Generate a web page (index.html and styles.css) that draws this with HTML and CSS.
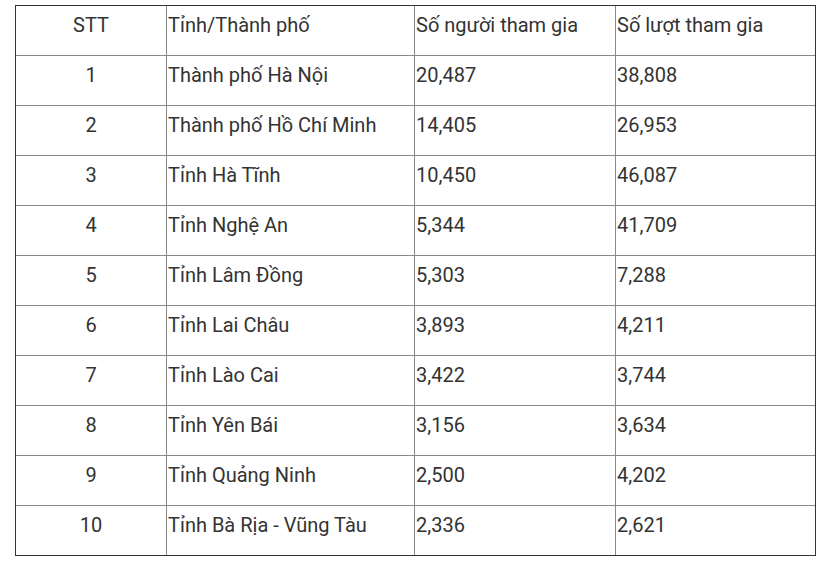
FILE: index.html
```html
<!DOCTYPE html>
<html lang="vi">
<head>
<meta charset="utf-8">
<link rel="stylesheet" href="styles.css">
</head>
<body>
<table class="stats">
  <colgroup>
    <col class="c1"><col class="c2"><col class="c3"><col class="c4">
  </colgroup>
  <tr><td class="num">STT</td><td>Tỉnh/Thành phố</td><td>Số người tham gia</td><td>Số lượt tham gia</td></tr>
  <tr><td class="num">1</td><td>Thành phố Hà Nội</td><td>20,487</td><td>38,808</td></tr>
  <tr><td class="num">2</td><td>Thành phố Hồ Chí Minh</td><td>14,405</td><td>26,953</td></tr>
  <tr><td class="num">3</td><td>Tỉnh Hà Tĩnh</td><td>10,450</td><td>46,087</td></tr>
  <tr><td class="num">4</td><td>Tỉnh Nghệ An</td><td>5,344</td><td>41,709</td></tr>
  <tr><td class="num">5</td><td>Tỉnh Lâm Đồng</td><td>5,303</td><td>7,288</td></tr>
  <tr><td class="num">6</td><td>Tỉnh Lai Châu</td><td>3,893</td><td>4,211</td></tr>
  <tr><td class="num">7</td><td>Tỉnh Lào Cai</td><td>3,422</td><td>3,744</td></tr>
  <tr><td class="num">8</td><td>Tỉnh Yên Bái</td><td>3,156</td><td>3,634</td></tr>
  <tr><td class="num">9</td><td>Tỉnh Quảng Ninh</td><td>2,500</td><td>4,202</td></tr>
  <tr><td class="num">10</td><td>Tỉnh Bà Rịa - Vũng Tàu</td><td>2,336</td><td>2,621</td></tr>
</table>
</body>
</html>
```
FILE: styles.css
```css
html, body {
  margin: 0;
  background: #fff;
}
body {
  padding: 5px 0 0 15px;
  font-family: Roboto, "Liberation Sans", sans-serif;
  font-size: 20px;
  color: #333;
}
.stats {
  border-collapse: separate;
  border-spacing: 0;
  border: 1px solid #333;
  table-layout: fixed;
  width: 801px;
}
.c1 { width: 151px; }
.c2 { width: 248px; }
.c3 { width: 201px; }
.c4 { width: 199px; }
.stats tr { height: 50px; }
.stats tr:last-child { height: 49px; }
.stats td {
  box-sizing: border-box;
  padding: 6px 1px 0 1px;
  line-height: 27px;
  vertical-align: top;
  text-align: left;
  border-right: 1px solid #888;
  border-bottom: 1px solid #888;
  white-space: nowrap;
}
.stats td:last-child { border-right: none; }
.stats tr:last-child td { border-bottom: none; }
.stats td.num { text-align: center; }
```
